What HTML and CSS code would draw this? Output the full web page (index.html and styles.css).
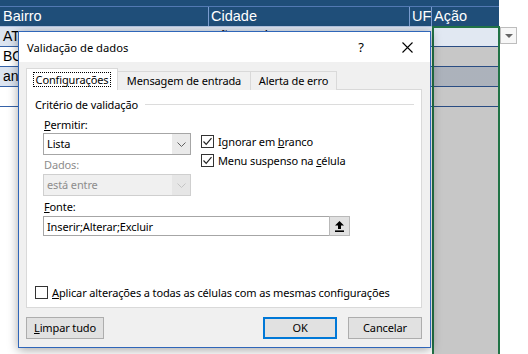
FILE: index.html
```html
<!DOCTYPE html>
<html>
	<head>
		<meta charset="UTF-8">
		<title>Validação de dados</title>
		<link rel="stylesheet" href="styles.css">
	</head>
	<body>
		<div class="sheet">
			<div class="band"></div>
			<div class="row head">
				<div class="c">Bairro</div>
				<div class="c">Cidade</div>
				<div class="c">UF</div>
				<div class="c">Ação</div>
			</div>
			<div class="row alt">
				<div class="c">ATALAIA</div>
				<div class="c">São Paulo</div>
				<div class="c">SP</div>
				<div class="c"></div>
			</div>
			<div class="row">
				<div class="c">BOA VISTA</div>
				<div class="c">São Paulo</div>
				<div class="c">SP</div>
				<div class="c"></div>
			</div>
			<div class="row alt">
				<div class="c">anchieta</div>
				<div class="c">São Bernardo</div>
				<div class="c">SP</div>
				<div class="c"></div>
			</div>
			<div class="row">
				<div class="c"></div>
				<div class="c"></div>
				<div class="c"></div>
				<div class="c"></div>
			</div>
		</div>

		<!-- seleção da coluna Ação -->
		<div class="selection"></div>
		<div class="cell-drop"><i></i></div>

		<div class="dialog">
			<div class="titlebar">
				<span class="title">Validação de dados</span>
				<span class="tbtn">?</span>
				<span class="tbtn">
					<svg width="11" height="11" viewBox="0 0 11 11"><path d="M0.5 0.5L10.5 10.5M10.5 0.5L0.5 10.5" stroke="#000" stroke-width="1.1" fill="none"/></svg>
				</span>
			</div>
			<div class="dbody">
				<div class="tabs">
					<div class="tab active"><span class="focus">Configurações</span></div>
					<div class="tab">Mensagem de entrada</div>
					<div class="tab">Alerta de erro</div>
				</div>
				<div class="panel">
					<div class="legend"><span>Critério de validação</span><i class="rule"></i></div>
					<div class="criteria">
						<div class="col">
							<div class="lbl"><u>P</u>ermitir:</div>
							<div class="select">
								<span class="val">Lista</span>
								<span class="chev"><svg width="9" height="5" viewBox="0 0 9 5"><path d="M0.5 0.5L4.5 4.5L8.5 0.5" stroke="#606060" fill="none"/></svg></span>
							</div>
							<div class="lbl dim">Dados:</div>
							<div class="select disabled">
								<span class="val">está entre</span>
								<span class="chev"><svg width="9" height="5" viewBox="0 0 9 5"><path d="M0.5 0.5L4.5 4.5L8.5 0.5" stroke="#c4c4c4" fill="none"/></svg></span>
							</div>
						</div>
						<div class="checks">
							<div class="check">
								<span class="box"><svg width="11" height="11" viewBox="0 0 11 11"><path d="M1.5 5.5L4.2 8.3L9.5 2.2" stroke="#222" stroke-width="1.2" fill="none"/></svg></span>
								<span>Ignorar em <u>b</u>ranco</span>
							</div>
							<div class="check">
								<span class="box"><svg width="11" height="11" viewBox="0 0 11 11"><path d="M1.5 5.5L4.2 8.3L9.5 2.2" stroke="#222" stroke-width="1.2" fill="none"/></svg></span>
								<span>Menu suspenso na <u>c</u>élula</span>
							</div>
						</div>
					</div>
					<div class="lbl src"><u>F</u>onte:</div>
					<div class="source">
						<span class="val">Inserir;Alterar;Excluir</span>
						<span class="pick"><svg width="9" height="11" viewBox="0 0 9 11"><path d="M4.5 0L9 4.6H6V8H3V4.6H0Z" fill="#000"/><rect x="0" y="9.4" width="9" height="1.6" fill="#000"/></svg></span>
					</div>
					<div class="check apply">
						<span class="box"></span>
						<span><u>A</u>plicar alterações a todas as células com as mesmas configurações</span>
					</div>
				</div>
				<div class="actions">
					<div class="btn wide"><u>L</u>impar tudo</div>
					<div class="btns">
						<div class="btn ok">OK</div>
						<div class="btn">Cancelar</div>
					</div>
				</div>
			</div>
		</div>
	</body>
</html>
```

FILE: styles.css
```css
* {
	box-sizing: border-box;
}

html,
body {
	margin: 0;
	padding: 0;
}

body {
	width: 528px;
	height: 354px;
	overflow: hidden;
	position: relative;
	background: #fff;
	font-family: "Noto Sans", sans-serif;
}

/* planilha */
.sheet {
	width: 499px;
	font-family: "Liberation Sans", Arial, sans-serif;
	font-size: 14px;
	color: #000;
}

.band {
	height: 7px;
	background: #1f4e79;
	border-bottom: 1px solid #5279b3;
}

.row {
	display: grid;
	grid-template-columns: 208px 201px 22px 68px;
	height: 20px;
	border-bottom: 1px solid #3562a8;
}

.row .c {
	padding-left: 3px;
	line-height: 19px;
	white-space: nowrap;
	overflow: hidden;
}

.row.alt {
	background: #dce4f0;
}

.head {
	background: #1f4e79;
	color: #fff;
	border-bottom-color: #b4c5e4;
	font-size: 14.5px;
}

.head .c + .c {
	border-left: 1px solid #7a9ccf;
	padding-left: 2px;
}

.selection {
	position: absolute;
	left: 432px;
	top: 26px;
	width: 68px;
	height: 340px;
	border: 2px solid #217346;
	background: linear-gradient(to bottom, rgba(255, 255, 255, .15) 0, rgba(255, 255, 255, .15) 18px, rgba(0, 0, 0, .22) 18px);
}

.cell-drop {
	position: absolute;
	left: 500px;
	top: 27px;
	width: 17px;
	height: 17px;
	background: #f7f7f7;
	border: 1px solid #bdbdbd;
}

.cell-drop i {
	position: absolute;
	left: 4px;
	top: 6px;
	border-left: 4px solid transparent;
	border-right: 4px solid transparent;
	border-top: 4px solid #666;
}

/* janela */
.dialog {
	position: absolute;
	left: 18px;
	top: 31px;
	width: 413px;
	height: 317px;
	border: 1px solid #2f66b9;
	background: #f0f0f0;
	box-shadow: 0 2px 10px rgba(0, 0, 0, .35);
	font-size: 11px;
	letter-spacing: -0.13px;
	color: #000;
}

.titlebar {
	display: flex;
	align-items: center;
	height: 30px;
	background: #fff;
}

.title {
	flex: 1;
	padding-left: 8px;
	font-size: 11.2px;
	letter-spacing: 0;
}

.tbtn {
	width: 46px;
	height: 30px;
	display: flex;
	align-items: center;
	justify-content: center;
	font-size: 13px;
}

.dbody {
	padding: 7px 8px 0 7px;
}

.tabs {
	display: flex;
	align-items: flex-end;
	height: 21px;
	margin-bottom: -1px;
	position: relative;
	z-index: 1;
}

.tab {
	height: 19px;
	line-height: 18px;
	text-align: center;
	white-space: nowrap;
	background: #f0f0f0;
	border: 1px solid #d9d9d9;
	border-bottom: none;
}

.tab:nth-child(2) {
	width: 133px;
	border-left: none;
}

.tab:nth-child(3) {
	width: 86px;
	border-left: none;
}

.tab.active {
	width: 92px;
	height: 22px;
	background: #fff;
	padding-top: 2px;
}

.tab .focus {
	display: inline-block;
	border: 1px dotted #000;
	line-height: 13px;
	padding: 0 2px;
}

.panel {
	height: 219px;
	background: #fff;
	border: 1px solid #d9d9d9;
	padding: 6px 7px 0 8px;
}

.legend {
	display: flex;
	align-items: center;
	height: 16px;
}

.legend .rule {
	flex: 1;
	height: 1px;
	background: #dcdcdc;
	margin-left: 7px;
}

.criteria {
	display: flex;
	padding-left: 8px;
	margin-top: 5px;
}

.col {
	width: 148px;
}

.lbl {
	height: 16px;
	line-height: 16px;
	padding-left: 1px;
}

.lbl.dim {
	color: #8d8d8d;
	margin-top: 2px;
}

.select {
	display: flex;
	height: 22px;
	border: 1px solid #a6a6a6;
	background: #fff;
}

.select .val,
.source .val {
	flex: 1;
	line-height: 20px;
	padding-left: 3px;
}

.select .chev {
	width: 18px;
	display: flex;
	align-items: center;
	justify-content: center;
	background: #eaeaea;
}

.select.disabled {
	margin-top: 1px;
	background: #f0f0f0;
	border-color: #cfcfcf;
	color: #8d8d8d;
}

.select.disabled .chev {
	background: #e6e6e6;
}

.checks {
	margin-left: 10px;
	padding-top: 16px;
}

.check {
	display: flex;
	align-items: center;
	height: 16px;
	white-space: nowrap;
}

.check + .check {
	margin-top: 3px;
}

.box {
	flex: none;
	width: 13px;
	height: 13px;
	border: 1px solid #333;
	background: #fff;
	margin-right: 4px;
	display: flex;
	align-items: center;
	justify-content: center;
}

.lbl.src {
	margin: 3px 0 1px 8px;
}

.source {
	display: flex;
	width: 307px;
	height: 20px;
	margin-left: 8px;
	border: 1px solid #a6a6a6;
}

.source .pick {
	width: 21px;
	background: #e1e1e1;
	border: 1px solid #b9b9b9;
	display: flex;
	align-items: center;
	justify-content: center;
	margin: -1px -1px -1px 0;
}

.check.apply {
	margin-top: 48px;
}

.actions {
	display: flex;
	justify-content: space-between;
	margin-top: 9px;
}

.btns {
	display: flex;
	gap: 11px;
}

.btn {
	width: 74px;
	height: 22px;
	line-height: 20px;
	text-align: center;
	background: #e1e1e1;
	border: 1px solid #adadad;
}

.btn.wide {
	width: 78px;
}

.btn.ok {
	border: 2px solid #0078d7;
	line-height: 18px;
}
```
